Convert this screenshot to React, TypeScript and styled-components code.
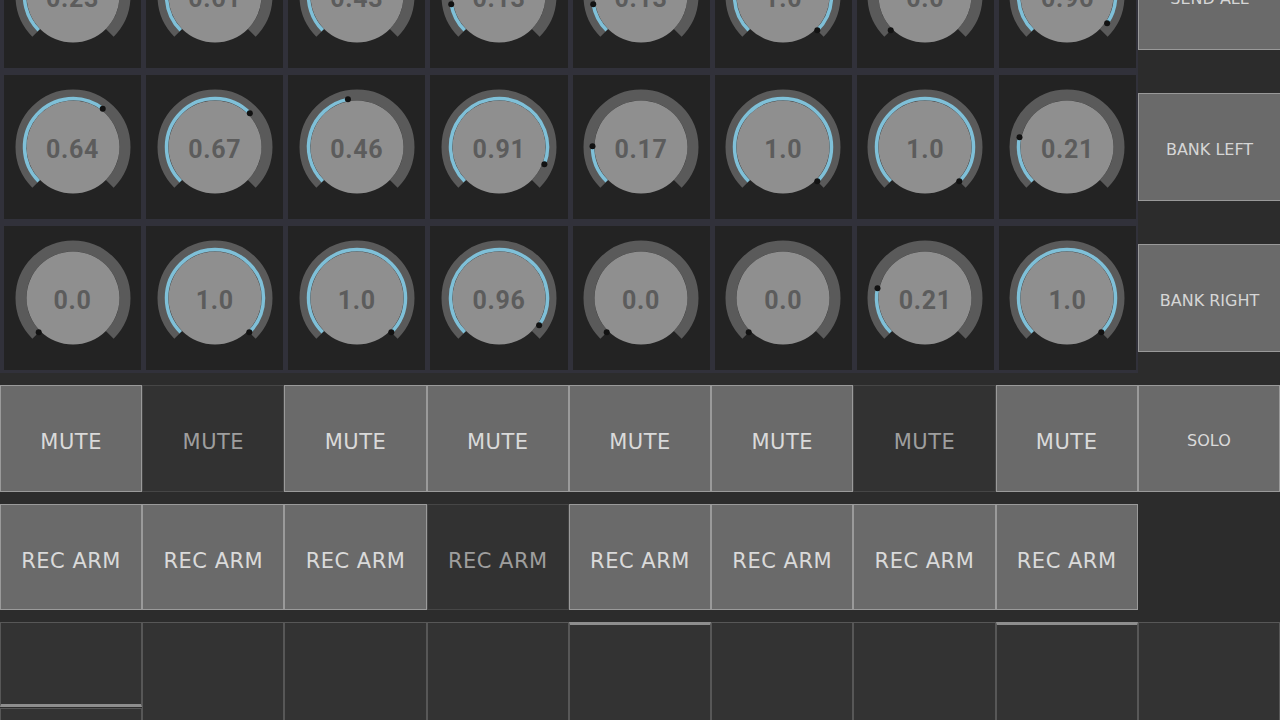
import React from "react";
import styled, { createGlobalStyle, css } from "styled-components";

const GlobalStyle = createGlobalStyle`
  html, body {
    margin: 0;
    padding: 0;
    background: #2c2c2c;
    overflow: hidden;
  }
  * { box-sizing: border-box; }
`;

const knobRows = [
  ["0.23", "0.61", "0.43", "0.13", "0.13", "1.0", "0.0", "0.96"],
  ["0.64", "0.67", "0.46", "0.91", "0.17", "1.0", "1.0", "0.21"],
  ["0.0", "1.0", "1.0", "0.96", "0.0", "0.0", "0.21", "1.0"],
];

const sideButtons = ["SEND ALL", "BANK LEFT", "BANK RIGHT"];

const muteOn = [true, false, true, true, true, true, false, true];
const recOn = [true, true, true, false, true, true, true, true];

const Page = styled.div`
  margin-top: -80px;
  width: 1280px;
`;

const TopSection = styled.section`
  display: grid;
  grid-template-columns: 1138px 1fr;
`;

const KnobGrid = styled.div`
  display: grid;
  grid-template-columns: repeat(8, 1fr);
  grid-auto-rows: 144px;
  gap: 7px 5px;
  padding: 4px 2px 3px 4px;
  background: #31313a;
`;

const KnobCell = styled.div`
  background: #232323;
  display: flex;
  align-items: center;
  justify-content: center;
`;

const KnobFace = styled.div`
  display: grid;
  width: 120px;
  height: 120px;
  & > * {
    grid-area: 1 / 1;
  }
`;

const KnobValue = styled.span`
  align-self: center;
  justify-self: center;
  margin-top: 5px;
  font-family: Roboto, "Liberation Sans", sans-serif;
  font-weight: 700;
  font-size: 25px;
  letter-spacing: 0.7px;
  color: #5c5c5c;
`;

const SidePanel = styled.div`
  display: grid;
  grid-auto-rows: 144px;
  row-gap: 7px;
  padding-top: 4px;
  align-items: center;
`;

const SideButton = styled.div`
  height: 108px;
  display: flex;
  align-items: center;
  justify-content: center;
  padding-top: 4px;
  background: #6a6a6a;
  border: 1px solid #999;
  border-right: none;
  font-family: "DejaVu Sans", sans-serif;
  font-size: 16px;
  color: #d6d6d6;
`;

const PadSection = styled.section`
  display: grid;
  grid-template-columns: repeat(9, 1fr);
  grid-template-rows: 107px 106px 120px;
  row-gap: 12px;
  padding-top: 12px;
`;

const Toggle = styled.div<{ $on: boolean; $small?: boolean }>`
  display: flex;
  align-items: center;
  justify-content: center;
  padding-top: ${(p) => (p.$small ? "4px" : "7px")};
  font-family: "DejaVu Sans", sans-serif;
  font-size: ${(p) => (p.$small ? "16px" : "21px")};
  letter-spacing: ${(p) => (p.$small ? "0" : "0.5px")};
  ${(p) =>
    p.$on
      ? css`
          background: #6a6a6a;
          border: 1px solid #9a9a9a;
          color: #dadada;
        `
      : css`
          background: #323232;
          border: 1px solid #464646;
          color: #9e9e9e;
        `}
`;

const EmptySlot = styled.div``;

const Pad = styled.div<{ $lit?: boolean }>`
  background: #333333;
  border: 1px solid #575757;
  border-top: ${(p) => (p.$lit ? "3px solid #8e8e8e" : "1px solid #575757")};
`;

const PadStack = styled.div`
  display: flex;
  flex-direction: column;
`;

const PadUpper = styled.div`
  height: 85px;
  background: #333333;
  border: 1px solid #575757;
  border-bottom: 3px solid #8e8e8e;
`;

const PadLower = styled.div`
  flex: 1;
  background: #333333;
  border: 1px solid #575757;
  margin-top: 1px;
`;

const polar = (r: number, deg: number): [number, number] => {
  const a = ((deg - 90) * Math.PI) / 180;
  return [60 + r * Math.cos(a), 60 + r * Math.sin(a)];
};

const arcPath = (r: number, a0: number, a1: number) => {
  const [x0, y0] = polar(r, a0);
  const [x1, y1] = polar(r, a1);
  const large = a1 - a0 > 180 ? 1 : 0;
  return `M ${x0} ${y0} A ${r} ${r} 0 ${large} 1 ${x1} ${y1}`;
};

const Knob = ({ value }: { value: string }) => {
  const v = parseFloat(value);
  const end = -135 + 270 * v;
  const [dx, dy] = polar(48.5, end);
  return (
    <KnobFace>
      <svg width="120" height="120" viewBox="0 0 120 120">
        <path d={arcPath(52, -135, 135)} fill="none" stroke="#5a5a5a" strokeWidth="11" />
        <circle cx="60" cy="60" r="46.5" fill="#8f8f8f" />
        {v > 0.001 && (
          <path d={arcPath(48.5, -135, end)} fill="none" stroke="#7fc0d8" strokeWidth="3.5" />
        )}
        <circle cx={dx} cy={dy} r="3" fill="#121212" />
      </svg>
      <KnobValue>{value}</KnobValue>
    </KnobFace>
  );
};

const App = () => (
  <>
    <GlobalStyle />
    <Page>
      <TopSection>
        <KnobGrid>
          {knobRows.flat().map((val, i) => (
            <KnobCell key={i}>
              <Knob value={val} />
            </KnobCell>
          ))}
        </KnobGrid>
        <SidePanel>
          {sideButtons.map((label) => (
            <SideButton key={label}>{label}</SideButton>
          ))}
        </SidePanel>
      </TopSection>
      <PadSection>
        {muteOn.map((on, i) => (
          <Toggle key={`m${i}`} $on={on}>
            MUTE
          </Toggle>
        ))}
        <Toggle $on $small>
          SOLO
        </Toggle>
        {recOn.map((on, i) => (
          <Toggle key={`r${i}`} $on={on}>
            REC ARM
          </Toggle>
        ))}
        <EmptySlot />
        <PadStack>
          <PadUpper />
          <PadLower />
        </PadStack>
        {[1, 2, 3, 4, 5, 6, 7, 8].map((i) => (
          <Pad key={`p${i}`} $lit={i === 4 || i === 7} />
        ))}
      </PadSection>
    </Page>
  </>
);

export default App;
